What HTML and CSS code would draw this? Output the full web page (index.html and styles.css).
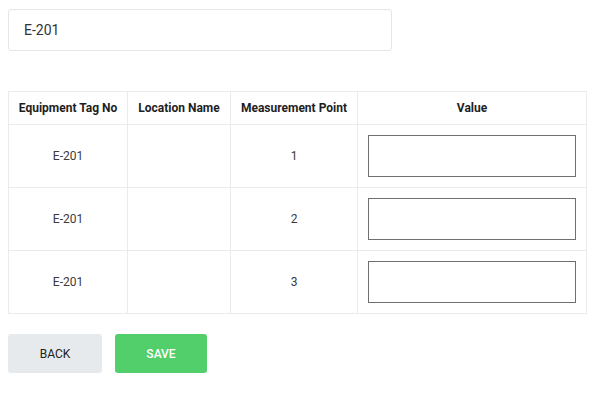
FILE: index.html
```html
<!DOCTYPE html>
<html lang="en">
<head>
    <meta charset="UTF-8">
    <meta name="viewport" content="width=device-width, initial-scale=1.0">
    <title>Measurement Entry</title>
    <link rel="stylesheet" href="styles.css">
</head>

<body>
    <div class="page">
        <!-- Selected equipment -->
        <div class="tag-field">E-201</div>

        <!-- Measurement points -->
        <table class="points">
            <thead>
                <tr>
                    <th class="col-tag">Equipment Tag No</th>
                    <th class="col-loc">Location Name</th>
                    <th class="col-point">Measurement Point</th>
                    <th class="col-value">Value</th>
                </tr>
            </thead>
            <tbody>
                <tr>
                    <td>E-201</td>
                    <td></td>
                    <td>1</td>
                    <td class="value-cell"><input type="text" class="value-input"></td>
                </tr>
                <tr>
                    <td>E-201</td>
                    <td></td>
                    <td>2</td>
                    <td class="value-cell"><input type="text" class="value-input"></td>
                </tr>
                <tr>
                    <td>E-201</td>
                    <td></td>
                    <td>3</td>
                    <td class="value-cell"><input type="text" class="value-input"></td>
                </tr>
            </tbody>
        </table>

        <div class="actions">
            <button class="btn back">BACK</button>
            <button class="btn save">SAVE</button>
        </div>
    </div>
</body>
</html>
```

FILE: styles.css
```css
/* styles.css */
body {
    font-family: Roboto, "Liberation Sans", sans-serif;
    margin: 0;
    padding: 0;
    background-color: #fff;
    color: #333;
}

.page {
    padding: 9px 8px;
}

.tag-field {
    width: 384px;
    height: 42px;
    box-sizing: border-box;
    border: 1px solid #e6e6e6;
    border-radius: 3px;
    padding: 0 15px;
    font-size: 14px;
    line-height: 40px;
    color: #333;
}

.points {
    margin-top: 40px;
    width: 579px;
    border-collapse: collapse;
    font-size: 12px;
}

.points th,
.points td {
    border: 1px solid #ebebeb;
    text-align: center;
    padding: 0;
}

.points th {
    height: 32px;
    font-weight: bold;
    color: #1e1e1e;
}

.points td {
    height: 62px;
    color: #3a3a3a;
}

.col-tag { width: 118px; }
.col-loc { width: 102px; }
.col-point { width: 126px; }

.points td.value-cell {
    padding: 0 10px;
}

.value-input {
    display: block;
    width: 100%;
    height: 42px;
    box-sizing: border-box;
    border: 1px solid #6c7072;
    border-radius: 0;
    margin: 0;
    outline: none;
}

.actions {
    display: flex;
    gap: 13px;
    margin-top: 20px;
}

.btn {
    height: 39px;
    border: none;
    border-radius: 3px;
    font-family: inherit;
    font-size: 12px;
    cursor: pointer;
}

.btn.back {
    width: 94px;
    background-color: #e7eaec;
    color: #222;
}

.btn.save {
    width: 92px;
    background-color: #52cf6b;
    color: #fff;
    font-weight: 500;
}
```
